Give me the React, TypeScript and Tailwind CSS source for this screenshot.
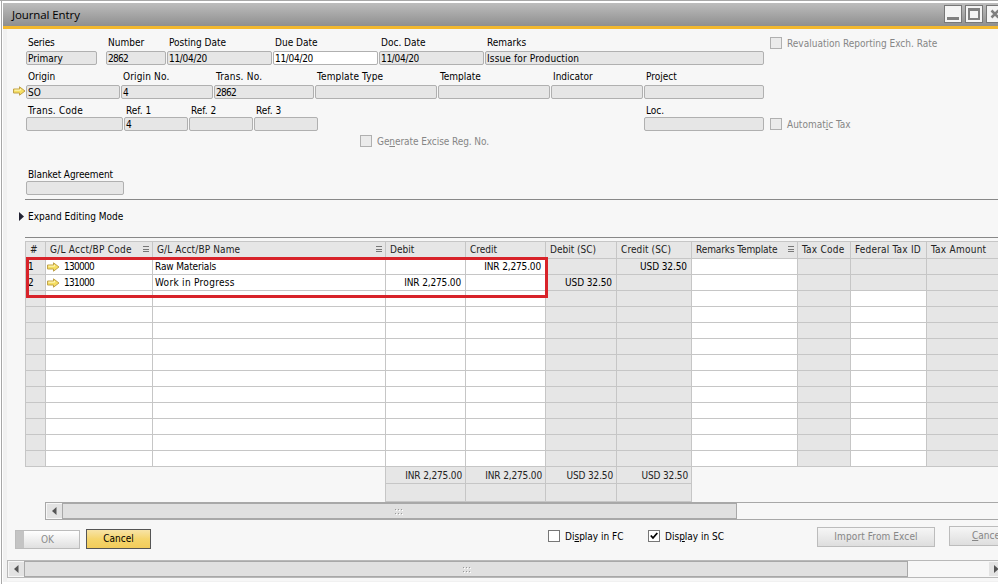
import clsx from 'clsx'
import type { ReactNode } from 'react'

type FieldDef = { label: string; value?: string; cls: string; white?: boolean; low?: boolean; lt?: string; vt?: string }

const ROW_1: FieldDef[] = [
  { label: 'Series', value: 'Primary', cls: 'w-[71px] mr-[9px]', lt: 'tracking-[-.2px]' },
  { label: 'Number', value: '2862', cls: 'w-[60px] mr-px', vt: 'tracking-[-.7px]' },
  { label: 'Posting Date', value: '11/04/20', cls: 'w-[105px] mr-px', vt: 'tracking-[-.3px]' },
  { label: 'Due Date', value: '11/04/20', cls: 'w-[105px] mr-px', vt: 'tracking-[-.3px]', white: true },
  { label: 'Doc. Date', value: '11/04/20', cls: 'w-[105px] mr-px', vt: 'tracking-[-.3px]' },
  { label: 'Remarks', value: 'Issue for Production', cls: 'w-[279px]', vt: 'tracking-[.15px]' },
]

const ROW_2: FieldDef[] = [
  { label: 'Origin', value: 'SO', cls: 'w-[94px] mr-px' },
  { label: 'Origin No.', value: '4', cls: 'w-[92px] mr-px', lt: 'tracking-[.15px]' },
  { label: 'Trans. No.', value: '2862', cls: 'w-[100px] mr-px', lt: 'tracking-[.2px]', vt: 'tracking-[-.7px]' },
  { label: 'Template Type', cls: 'w-[122px] mr-px', lt: 'tracking-[.15px]' },
  { label: 'Template', cls: 'w-[112px] mr-px' },
  { label: 'Indicator', cls: 'w-[92px] mr-px' },
  { label: 'Project', cls: 'w-[120px]' },
]

const ROW_3: FieldDef[] = [
  { label: 'Trans. Code', cls: 'w-[97px] mr-px', lt: 'tracking-[.25px]' },
  { label: 'Ref. 1', value: '4', cls: 'w-[64px] mr-px' },
  { label: 'Ref. 2', cls: 'w-[64px] mr-px' },
  { label: 'Ref. 3', cls: 'w-[64px] mr-[326px]' },
  { label: 'Loc.', cls: 'w-[120px]' },
]

const GRID = 'grid grid-cols-[20px_107px_233px_80px_80px_71px_75px_106px_53px_76px_120px]'

const COLUMNS = [
  { label: '#' },
  { label: 'G/L Acct/BP Code', menu: true, lt: 'tracking-[.25px]' },
  { label: 'G/L Acct/BP Name', menu: true, lt: 'tracking-[.12px]' },
  { label: 'Debit' },
  { label: 'Credit' },
  { label: 'Debit (SC)' },
  { label: 'Credit (SC)', lt: 'tracking-[.1px]' },
  { label: 'Remarks Template', menu: true, lt: 'tracking-[-.1px]' },
  { label: 'Tax Code', lt: 'tracking-[.25px]' },
  { label: 'Federal Tax ID', lt: 'tracking-[.2px]' },
  { label: 'Tax Amount', lt: 'tracking-[.25px]' },
]

// columns that can not be edited
const LOCKED = [0, 5, 6, 8, 10]

const ROWS: string[][] = [
  ['1', '130000', 'Raw Materials', '', 'INR 2,275.00', '', 'USD 32.50'],
  ['2', '131000', 'Work in Progress', 'INR 2,275.00', '', 'USD 32.50', ''],
  ...Array.from({ length: 11 }, () => []),
]

const TOTALS = ['INR 2,275.00', 'INR 2,275.00', 'USD 32.50', 'USD 32.50']

function LinkArrow() {
  return (
    <svg width="13" height="10" viewBox="0 0 13 10" className="shrink-0">
      <path d="M.5 3h6V.8L12 5 6.500 9.200V7h-6z" fill="#f6df62" stroke="#c0a24a" strokeWidth="1" />
      <path d="M1.500 4.200h6V3" fill="none" stroke="#fdf6c0" strokeWidth="1" />
    </svg>
  )
}

function MenuIcon() {
  return (
    <span className="mt-[4px] flex h-[6px] w-[6px] shrink-0 flex-col justify-between">
      <i className="h-px bg-[#777]" />
      <i className="h-px bg-[#777]" />
      <i className="h-px bg-[#777]" />
    </span>
  )
}

function Field({ label, value, cls, white, low, lt, vt }: FieldDef) {
  return (
    <div className={clsx('flex shrink-0 flex-col', cls)}>
      <div className={clsx('shrink-0 pl-[2px] leading-[13px]', low ? 'h-[13px]' : 'h-[15px]', lt)}>{label}</div>
      <div
        className={clsx(
          'h-[14px] shrink-0 rounded-[2px] border border-[#b0b0b0] pl-px leading-[13px]',
          white ? 'bg-white' : 'bg-[#e6e6e6]',
          vt,
        )}
      >
        {value}
      </div>
    </div>
  )
}

function Check({ children, checked, disabled }: { children: ReactNode; checked?: boolean; disabled?: boolean }) {
  return (
    <div className={clsx('flex h-3 items-center', disabled && 'text-[#868686]')}>
      <span
        className={clsx(
          'flex h-3 w-3 shrink-0 items-center justify-center border',
          disabled ? 'border-[#b0b0b0] bg-[#ebebeb]' : 'border-[#777] bg-white',
        )}
      >
        {checked && (
          <svg width="8" height="8" viewBox="0 0 8 8">
            <path d="M.8 3.500 3 6 7.300 1" fill="none" stroke="#000" strokeWidth="1.800" />
          </svg>
        )}
      </span>
      <span className="ml-[5px] pt-px leading-3">{children}</span>
    </div>
  )
}

function Grip() {
  return (
    <span className="grid grid-cols-3 gap-x-[2px] gap-y-[3px]">
      {Array.from({ length: 6 }, (_, i) => (
        <i key={i} className="h-px w-px bg-[#999] shadow-[1px_1px_0_#fff]" />
      ))}
    </span>
  )
}

function Arrow({ right }: { right?: boolean }) {
  return (
    <span className="flex h-[14px] w-[15px] shrink-0 items-center justify-center bg-[#e3e3e3]">
      <svg width="5" height="8" viewBox="0 0 5 8">
        <path d={right ? 'M0 0v8l4.500-4z' : 'M4.500 0v8L0 4z'} fill="#555" />
      </svg>
    </span>
  )
}

function Cell({ row, col }: { row: number; col: number }) {
  const text = ROWS[row][col]
  const grey = LOCKED.includes(col) || (col === 9 && row < 2)
  return (
    <div
      className={clsx(
        'flex h-4 items-center border-b border-l border-[#c6c6c6] leading-[15px]',
        grey ? 'bg-[#e6e6e6]' : 'bg-white',
        col === 1 && 'pl-px tracking-[-.7px]',
        (col === 0 || col === 2) && 'pl-[2px]',
        col === 2 && (row === 0 ? 'tracking-[-.15px]' : 'tracking-[.3px]'),
        (col === 3 || col === 4) && 'justify-end pr-[4px] tracking-[-.15px]',
        col > 4 && 'justify-end pr-[4px] tracking-[-.1px]',
      )}
    >
      {col === 1 && text && <span className="mr-[4px] flex"><LinkArrow /></span>}
      {text}
    </div>
  )
}

export default function App() {
  return (
    <div className="relative flex h-[584px] w-[998px] flex-col overflow-hidden whitespace-nowrap border-t border-[#a8a8a8] bg-white pl-[3px] font-['DejaVu_Sans_Condensed','DejaVu_Sans',sans-serif] text-[10px] text-black shadow-[inset_1px_0_0_#fff,inset_2px_0_0_#a8a8a8]">
      {/* Title bar */}
      <div className="mt-[2px] flex h-[26px] shrink-0 border-b-[3px] border-[#f3b82e] bg-linear-to-b from-[#bdbdbd] to-[#8f8f8f]">
        <div className="ml-[9px] mt-[3px] flex-1 font-['Open_Sans',sans-serif] text-[11.5px] leading-[18px] tracking-[-.1px]">Journal Entry</div>
        <div className="mt-[2px] flex w-[54px] shrink-0 gap-[3px]">
          <span className="flex h-[18px] w-[18px] shrink-0 items-end justify-center border border-[#777] bg-[#f4f4f4] pb-[2px]">
            <i className="h-[3px] w-3 bg-[#808080]" />
          </span>
          <span className="flex h-[18px] w-[18px] shrink-0 items-center justify-center border border-[#777] bg-[#f4f4f4]">
            <i className="h-3 w-3 border-2 border-t-[3px] border-[#808080]" />
          </span>
          <span className="flex h-[18px] w-[18px] shrink-0 items-center justify-center border border-[#777] bg-[#f4f4f4]">
            <svg width="10" height="10" viewBox="0 0 10 10">
              <path d="M1.500 1.500l7 7M8.500 1.500l-7 7" stroke="#808080" strokeWidth="2.500" />
            </svg>
          </span>
        </div>
      </div>

      <div className="flex h-[553px] shrink-0 flex-col border-b border-l-4 border-[#f1f1f1] bg-[#f7f7f7]">
        {/* Header fields */}
        <div className="flex h-[34px] shrink-0 pl-[19px] pt-[7px]">
          {ROW_1.map(f => <Field key={f.label} {...f} />)}
          <div className="ml-[6px] mt-px">
            <Check disabled>Revaluation Reporting Exch. Rate</Check>
          </div>
        </div>
        <div className="flex h-[34px] shrink-0 pl-[6px] pt-[7px]">
          <div className="w-[13px] shrink-0 pt-[16px]"><LinkArrow /></div>
          {ROW_2.map(f => <Field key={f.label} {...f} />)}
        </div>
        <div className="flex h-[34px] shrink-0 pl-[19px] pt-[7px]">
          {ROW_3.map(f => <Field key={f.label} low {...f} />)}
          <div className="ml-[6px] mt-[14px]">
            <Check disabled>Automat<u>i</u>c Tax</Check>
          </div>
        </div>
        <div className="h-[35px] shrink-0 pl-[353px] pt-1 tracking-[-.08px]">
          <Check disabled>Ge<u>n</u>erate Excise Reg. No.</Check>
        </div>
        <div className="ml-[18px] flex h-[34px] shrink-0 border-b border-[#888] pl-px pt-[2px]">
          <Field low label="Blanket Agreement" cls="w-[98px]" lt="tracking-[-.1px]" />
        </div>
        <div className="ml-[12px] flex h-[37px] shrink-0 items-center gap-[4px] pb-[4px]">
          <svg width="5" height="9" viewBox="0 0 5 9">
            <path d="M0 0v9l5-4.500z" fill="#223" />
          </svg>
          Expand Editing Mode
        </div>

        {/* Journal lines */}
        <div className="relative ml-[18px] h-[265px] shrink-0 border-t border-[#888] pt-[3px]">
          <div className={clsx(GRID, 'border-t border-[#c6c6c6]')}>
            {COLUMNS.map(c => (
              <div
                key={c.label}
                className="flex h-[17px] justify-between border-b border-l border-[#c6c6c6] bg-[#e6e6e6] pl-[4px] pr-[3px] leading-[16px] text-[#222]"
              >
                <span className={c.lt}>{c.label}</span>
                {c.menu && <MenuIcon />}
              </div>
            ))}
          </div>
          {ROWS.map((_, r) => (
            <div key={r} className={GRID}>
              {COLUMNS.map((c, i) => <Cell key={c.label} row={r} col={i} />)}
            </div>
          ))}
          <div className="ml-[360px] grid w-[307px] grid-cols-[80px_80px_71px_76px]">
            {TOTALS.map((t, i) => (
              <div key={i} className={clsx('border-l border-[#c6c6c6] bg-[#e6e6e6]', i === 3 && 'border-r')}>
                <div className="h-[17px] border-b border-[#c6c6c6] pr-[3px] text-right leading-[17px] tracking-[-.15px] text-[#222]">{t}</div>
                <div className="h-[18px] border-b border-[#c6c6c6]" />
              </div>
            ))}
          </div>
          {/* highlighted postings */}
          <div className="absolute left-[1px] top-[19px] h-[41px] w-[522px] border-[3px] border-[#d8232a]" />
        </div>

        <div className="ml-[38px] flex h-[18px] shrink-0 border border-r-0 border-[#a8a8a8] pl-px pt-px">
          <Arrow />
          <div className="-mt-px flex h-4 w-[675px] shrink-0 items-center justify-center border border-[#a8a8a8] bg-[#e0e0e0] pr-[2px]"><Grip /></div>
        </div>

        {/* Footer buttons */}
        <div className="flex h-[40px] shrink-0 pl-[8px] pt-[9px]">
          <div className="mt-px flex h-[19px] w-[65px] shrink-0 border border-[#bcbcbc] bg-linear-to-b from-white to-[#e0e0e0] text-[#8c8c8c]">
            <span className="w-2 bg-[#c4c4c4]" />
            <span className="w-[47px] text-center leading-[17px]">OK</span>
          </div>
          <div className="ml-[6px] h-5 w-[65px] shrink-0 border border-[#555] bg-linear-to-b from-[#f7e3a6] via-[#f5d56c] to-[#f2cc5a] text-center leading-[18px]">Cancel</div>
          <div className="ml-[397px] mt-px w-[100px] shrink-0"><Check>Di<u>s</u>play in FC</Check></div>
          <div className="mt-px w-[169px] shrink-0"><Check checked>Dis<u>p</u>lay in SC</Check></div>
          <div className="-mt-[2px] h-5 w-[118px] shrink-0 border border-[#bcbcbc] bg-linear-to-b from-[#f6f6f6] to-[#dedede] text-center leading-[18px] tracking-[.1px] text-[#868686]">Import From Excel</div>
          <div className="-mt-[3px] ml-[14px] h-5 w-[80px] shrink-0 border border-[#bcbcbc] bg-linear-to-b from-[#f6f6f6] to-[#dedede] pl-[22px] leading-[18px] text-[#868686]"><u>C</u>ancel</div>
        </div>

        <div className="flex h-[18px] shrink-0 border border-r-0 border-[#b8b8b8] pl-px pt-px">
          <Arrow />
          <div className="-mt-px flex h-4 w-[884px] shrink-0 items-center justify-center border border-[#a8a8a8] bg-[#e0e0e0]"><Grip /></div>
          <div className="ml-[81px] w-[10px] overflow-hidden"><Arrow right /></div>
        </div>
      </div>
    </div>
  )
}
